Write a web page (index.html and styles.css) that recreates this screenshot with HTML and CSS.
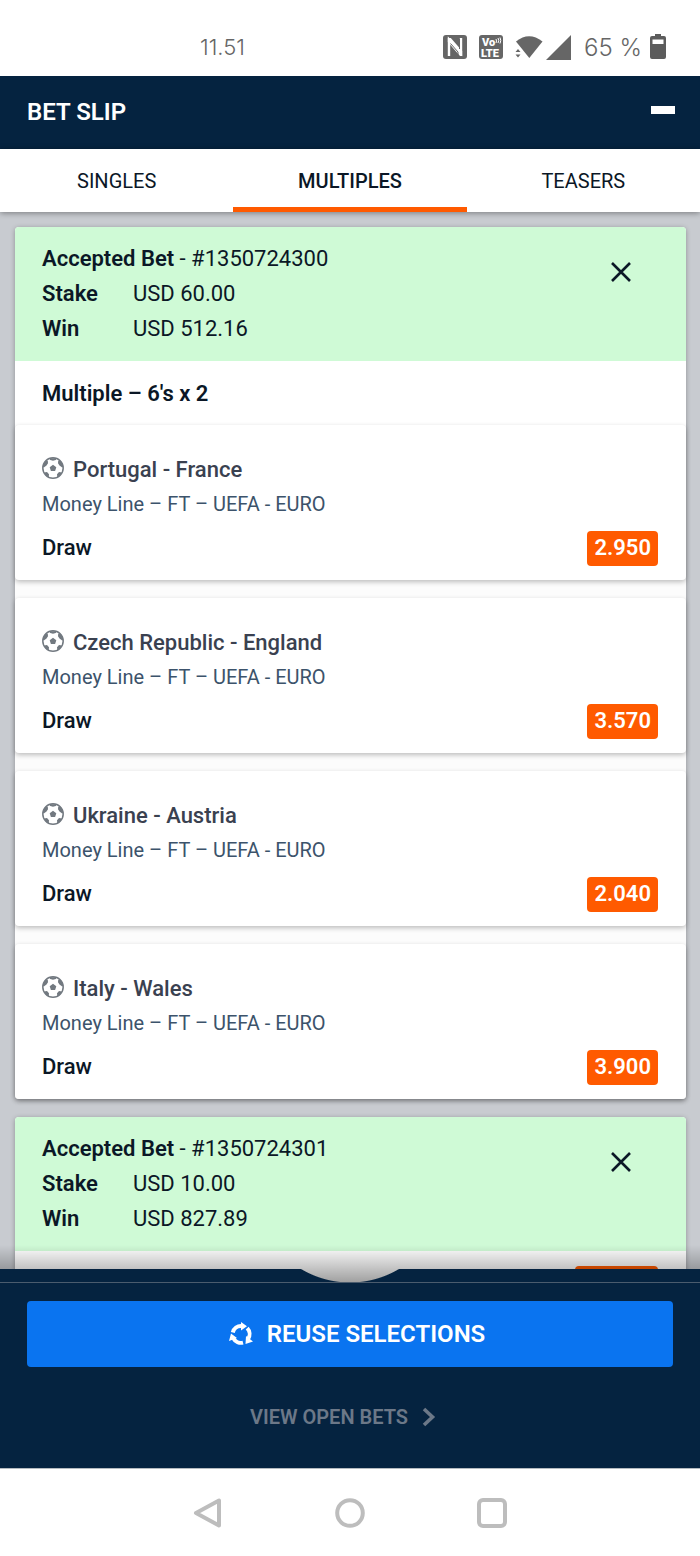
FILE: index.html
```
<!DOCTYPE html>
<html lang="en">
    <head>
        <meta charset="utf-8">
        <title>Bet Slip</title>
        <meta name="viewport" content="width=device-width, initial-scale=1">
        <link rel="stylesheet" href="styles.css">
    </head>
    <body>
        <!-- shared icons -->
        <svg class="sprite" aria-hidden="true">
            <symbol id="ball" viewBox="0 0 22 22">
                <circle cx="11" cy="11" r="10.200" fill="none" stroke="currentColor" stroke-width="1.500"/>
                <path fill="currentColor" d="M11 7.800l3.300 2.400-1.200 3.900H8.900L7.700 10.200zM7 1.200h8L13.800 3 11 3.800 8.200 3zM.800 9.500L2.300 5l2-1.600 1.500.4.2 2.500-1.500 2.200-2.700 2zM21.200 9.500L19.700 5l-2-1.600-1.500.4-.2 2.500 1.500 2.200 2.700 2zM2 15.500l3-.4 2 2.100-.3 3.300Q3.500 19 2 15.500zM20 15.500l-3-.4-2 2.100.3 3.300Q18.500 19 20 15.500z"/>
            </symbol>
            <symbol id="close" viewBox="0 0 22 22">
                <path d="M2 2l18 18M20 2L2 20" fill="none" stroke="currentColor" stroke-width="2.600"/>
            </symbol>
        </svg>

        <div class="statusBar">
            <span class="clock">11.51</span>
            <div class="statusIcons">
                <svg class="nfc" width="24" height="24" viewBox="0 0 24 24">
                    <rect width="24" height="24" rx="3" fill="#666"/>
                    <path d="M6 21V4.500L18 18V3" fill="none" stroke="#fff" stroke-width="2.400"/>
                    <path d="M4.800 3l3 0L19.200 16v5h-2.200L4.800 7z" fill="#fff"/>
                    <path d="M7.500 8.500L15 17v3M16.500 4v10" fill="none" stroke="#666" stroke-width="1"/>
                </svg>
                <svg class="volte" width="24" height="24" viewBox="0 0 24 24">
                    <rect width="24" height="24" rx="3" fill="#666"/>
                    <text x="3" y="11" class="volteText">Vo</text>
                    <text x="2" y="22" class="volteText">LTE</text>
                    <path d="M17 4q1 2 0 4M19 3q1.500 2.500 0 5M21 2.500q1.500 3 0 6" fill="none" stroke="#fff" stroke-width="1"/>
                </svg>
                <svg class="wifi" width="28" height="24" viewBox="0 0 28 24">
                    <path d="M1 6.500Q14-4 27.500 6.500L14.300 23z" fill="#666"/>
                    <path d="M.500 17L3 14l2.500 3zM.500 19.500h5L3 22.500z" fill="#666"/>
                </svg>
                <svg class="signal" width="25" height="25" viewBox="0 0 25 25">
                    <path d="M25 0v25H0z" fill="#666"/>
                </svg>
                <span class="battery">65 %</span>
                <svg width="16" height="26" viewBox="0 0 16 26">
                    <path d="M5 0h6v2h3q2 0 2 2v19q0 2-2 2H2q-2 0-2-2V4q0-2 2-2h3z" fill="#5c5c5c"/>
                    <path d="M2.500 5.500h11v4.500h-11z" fill="#fff"/>
                </svg>
            </div>
        </div>

        <header class="header">
            <h1 class="title">BET SLIP</h1>
            <button class="minimize" aria-label="Minimize"></button>
        </header>

        <nav class="tabs">
            <button class="tab">SINGLES</button>
            <button class="tab active">MULTIPLES</button>
            <button class="tab">TEASERS</button>
        </nav>

        <main class="slip">
            <section class="bet">
                <div class="betHead">
                    <div class="betInfo">
                        <p><b>Accepted Bet</b> - #1350724300</p>
                        <p class="row"><b class="label">Stake</b>USD 60.00</p>
                        <p class="row"><b class="label">Win</b>USD 512.16</p>
                    </div>
                    <button class="close" aria-label="Close"><svg width="22" height="22"><use href="#close"/></svg></button>
                </div>
                <div class="betType"><h2>Multiple – 6's x 2</h2></div>
                <div class="selections">
                    <article class="selection">
                        <h3 class="teams"><svg width="22" height="22"><use href="#ball"/></svg>Portugal - France</h3>
                        <p class="market">Money Line – FT – UEFA - EURO</p>
                        <div class="pick"><span>Draw</span><span class="odds">2.950</span></div>
                    </article>
                    <article class="selection">
                        <h3 class="teams"><svg width="22" height="22"><use href="#ball"/></svg>Czech Republic - England</h3>
                        <p class="market">Money Line – FT – UEFA - EURO</p>
                        <div class="pick"><span>Draw</span><span class="odds">3.570</span></div>
                    </article>
                    <article class="selection">
                        <h3 class="teams"><svg width="22" height="22"><use href="#ball"/></svg>Ukraine - Austria</h3>
                        <p class="market">Money Line – FT – UEFA - EURO</p>
                        <div class="pick"><span>Draw</span><span class="odds">2.040</span></div>
                    </article>
                    <article class="selection">
                        <h3 class="teams"><svg width="22" height="22"><use href="#ball"/></svg>Italy - Wales</h3>
                        <p class="market">Money Line – FT – UEFA - EURO</p>
                        <div class="pick"><span>Draw</span><span class="odds">3.900</span></div>
                    </article>
                </div>
            </section>

            <section class="bet">
                <div class="betHead">
                    <div class="betInfo">
                        <p><b>Accepted Bet</b> - #1350724301</p>
                        <p class="row"><b class="label">Stake</b>USD 10.00</p>
                        <p class="row"><b class="label">Win</b>USD 827.89</p>
                    </div>
                    <button class="close" aria-label="Close"><svg width="22" height="22"><use href="#close"/></svg></button>
                </div>
                <div class="betType" aria-hidden="true"><span class="odds">&nbsp;</span></div>
            </section>
        </main>

        <footer class="dock">
            <div class="notch"></div>
            <div class="actions">
                <button class="reuse">
                    <svg width="24" height="24" viewBox="0 0 24 24">
                        <path d="M3.800 10.500A8.500 8.500 0 0 1 12.500 4M18.200 6.200A8.500 8.500 0 0 1 19 17M14 20.600A8.500 8.500 0 0 1 4.500 16.500" fill="none" stroke="#fff" stroke-width="4"/>
                        <path d="M12 0l6 4.200-6 4.300zM24 19.500l-7.500 2.500.5-8zM0 19l2-7.500 6 4.500z" fill="#fff"/>
                    </svg>
                    REUSE SELECTIONS
                </button>
                <a class="openBets" href="#">VIEW OPEN BETS
                    <svg width="14" height="20" viewBox="0 0 14 20"><path d="M2 2l8.500 8L2 18" fill="none" stroke="currentColor" stroke-width="3.600"/></svg>
                </a>
            </div>
        </footer>

        <div class="systemNav">
            <button aria-label="Back"><svg width="30" height="30" viewBox="0 0 30 30"><path d="M26 2.500v25L3 15z"/></svg></button>
            <button aria-label="Home"><svg width="30" height="30" viewBox="0 0 30 30"><circle cx="15" cy="15" r="12.800"/></svg></button>
            <button aria-label="Recent"><svg width="30" height="30" viewBox="0 0 30 30"><rect x="2" y="2" width="26" height="26" rx="4"/></svg></button>
        </div>
    </body>
</html>
```

FILE: styles.css
```
* {
    margin: 0;
    padding: 0;
    box-sizing: border-box;
}

body {
    height: 100vh;
    display: flex;
    flex-flow: column nowrap;
    background-color: #fff;
    color: #0b1726;
    font-family: Roboto, sans-serif;
    font-size: 22px;
    overflow: hidden;
}

button {
    border: none;
    background: none;
    font-family: inherit;
    color: inherit;
    cursor: pointer;
}

.sprite {
    display: none;
}

.statusBar {
    flex: none;
    height: 76px;
    padding: 18px 34px 0 200px;
    display: flex;
    justify-content: space-between;
    align-items: center;
    font-family: Inter, sans-serif;
    font-size: 24px;
    font-weight: 300;
    color: #666;
}
.clock {
    font-size: 22px;
}
.statusIcons {
    display: flex;
    align-items: center;
}
.nfc, .volte {
    margin-right: 12px;
}
.wifi, .signal {
    margin-right: 3px;
}
.battery {
    margin: 0 8px 0 10px;
}
.volteText {
    font-family: Roboto, sans-serif;
    font-size: 11px;
    font-weight: 900;
    fill: #fff;
}

.header {
    flex: none;
    height: 73px;
    padding: 0 25px 2px 27px;
    display: flex;
    justify-content: space-between;
    align-items: center;
    background-color: #052340;
    color: #fff;
}
.title {
    font-size: 24px;
    font-weight: 600;
}
.minimize {
    width: 24px;
    height: 30px;
    padding: 9px 0 13px;
    background-color: #fff;
    background-clip: content-box;
}

.tabs {
    flex: none;
    height: 63px;
    display: flex;
    position: relative;
    z-index: 1;
    background-color: #fff;
    box-shadow: 0 1px 6px rgba(0, 0, 0, 0.4);
}
.tab {
    flex: 1;
    padding-top: 5px;
    border-bottom: 5px solid transparent;
    font-size: 20px;
}
.active {
    border-bottom-color: #ff5a00;
    font-weight: 500;
}

.slip {
    flex: 1;
    min-height: 0;
    padding: 15px 14px 0 15px;
    position: relative;
    overflow: hidden;
    background-color: #c8cbd0;
}
/* fade towards the dock */
.slip::after {
    content: '';
    position: absolute;
    left: 0;
    right: 0;
    bottom: 0;
    height: 38px;
    background: linear-gradient(transparent, rgba(0, 0, 0, 0.38));
}

.bet {
    margin-bottom: 18px;
    border-radius: 4px;
    background-color: #fff;
    box-shadow: 0 1px 5px rgba(0, 0, 0, 0.3);
}
.betHead {
    padding: 14px 18px 15px 27px;
    display: flex;
    justify-content: space-between;
    align-items: flex-start;
    border-radius: 4px 4px 0 0;
    background-color: #cffad6;
    line-height: 35px;
}
.betInfo b {
    font-weight: 600;
}
.row {
    display: flex;
}
.label {
    width: 91px;
}
.close {
    width: 40px;
    height: 40px;
    margin: 11px 27px 0 0;
    display: flex;
    justify-content: center;
    align-items: center;
}
.betType {
    min-height: 64px;
    padding: 0 28px 0 27px;
    display: flex;
    align-items: center;
}
.betType h2 {
    font-size: 22px;
    font-weight: 600;
}
.betType .odds {
    width: 83px;
    margin-left: auto;
}

.selections {
    display: flex;
    flex-flow: column nowrap;
    gap: 18px;
    border-radius: 4px;
    background-color: #fcfcfc;
}
.selection {
    padding: 27px 28px 14px 27px;
    border-radius: 4px;
    background-color: #fff;
    box-shadow: 0 2px 5px rgba(0, 0, 0, 0.25);
}
.teams {
    display: flex;
    align-items: center;
    gap: 9px;
    font-size: 22px;
    font-weight: 500;
    line-height: 35px;
    color: #3a4150;
}
.teams svg {
    margin-bottom: 4px;
    color: #727980;
}
.market {
    font-size: 20px;
    line-height: 35px;
    color: #3c536b;
}
.pick {
    margin-top: 9px;
    display: flex;
    justify-content: space-between;
    font-weight: 500;
    line-height: 34px;
}
.odds {
    padding: 0 7px 1px;
    border-radius: 4px;
    background-color: #ff5a00;
    color: #fff;
    font-weight: 600;
    line-height: 34px;
}

/* the dock overlaps the list so the cutout shows it */
.dock {
    flex: none;
    margin-top: -14px;
    position: relative;
    z-index: 1;
}
.notch {
    height: 14px;
    border-bottom: 1px solid #4b5c6e;
    background: radial-gradient(circle at 50% -82px, transparent 95px, #052340 96px) border-box;
}
.actions {
    padding: 18px 27px 39px;
    display: flex;
    flex-flow: column nowrap;
    align-items: center;
    gap: 38px;
    background-color: #052340;
}
.reuse {
    width: 100%;
    height: 66px;
    padding-left: 14px;
    display: flex;
    justify-content: center;
    align-items: center;
    gap: 14px;
    border-radius: 4px;
    background-color: #0a74f0;
    color: #fff;
    font-size: 24px;
    font-weight: 600;
}
.openBets {
    padding-right: 14px;
    display: flex;
    align-items: center;
    gap: 14px;
    font-size: 20px;
    font-weight: 600;
    line-height: 24px;
    color: #6c7888;
    text-decoration: none;
}

.systemNav {
    flex: none;
    height: 88px;
    display: flex;
    justify-content: center;
    align-items: center;
    gap: 112px;
    border-top: 1px solid #b4bac0;
}
.systemNav svg {
    display: block;
    fill: none;
    stroke: #bdbdbd;
    stroke-width: 4;
    stroke-linejoin: round;
}
```
